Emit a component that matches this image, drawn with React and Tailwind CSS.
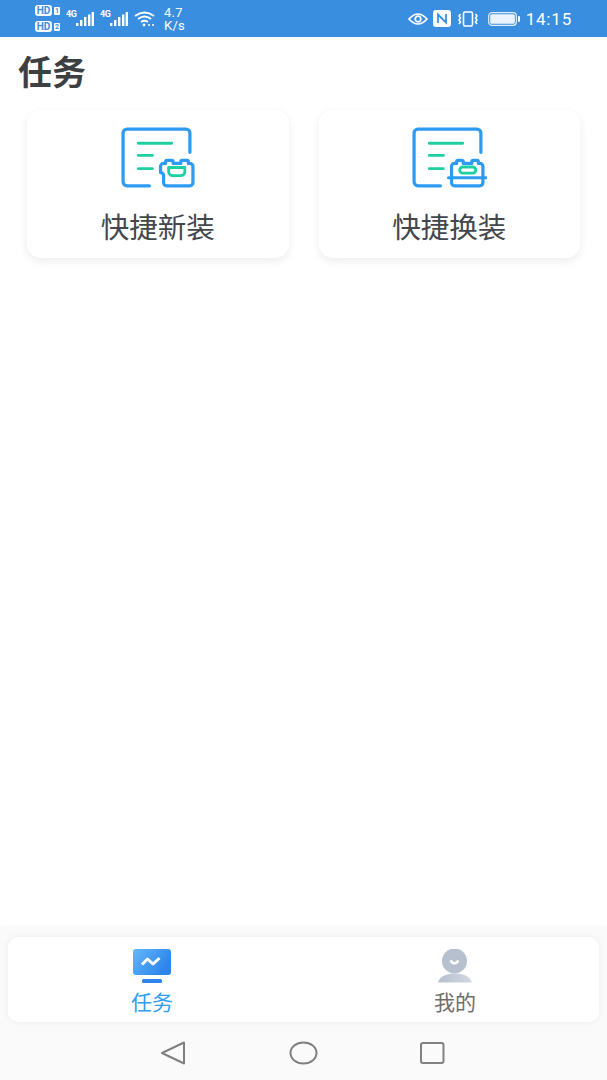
import React from "react";

const CJK = "font-['Roboto','Noto_Sans_CJK_SC',sans-serif]";

function Signal() {
  return (
    <div className="flex items-start h-[20px] mt-[1px]">
      <span className="text-[9px] leading-[10px] font-bold text-white font-['Roboto',sans-serif] w-[10px] tracking-[-0.4px]">4G</span>
      <svg width="18" height="17" viewBox="0 0 18 17" className="mt-[3px]" fill="#fff">
        <rect x="0" y="11" width="2.4" height="3" />
        <rect x="4" y="8" width="2.4" height="6" />
        <rect x="8" y="5" width="2.4" height="9" />
        <rect x="12" y="2.5" width="2.4" height="11.5" />
        <rect x="15.6" y="0" width="2.4" height="14" />
      </svg>
    </div>
  );
}

function HdBadge({ n }) {
  return (
    <div className="flex items-center gap-[2px] h-[11px]">
      <span className="w-[17px] h-[11px] rounded-[3px] bg-white text-[#3a8ee0] text-[10px] leading-[11px] font-bold text-center font-['Roboto',sans-serif]">HD</span>
      <span className="w-[6px] h-[8px] rounded-[1px] bg-white text-[#3a8ee0] text-[7px] leading-[8px] font-bold text-center font-['Roboto',sans-serif]">{n}</span>
    </div>
  );
}

function StatusBar() {
  return (
    <div className="h-[37px] shrink-0 bg-[#3a8ee0] flex items-center justify-between pl-[35px] pr-[35px] text-white">
      <div className="flex items-center">
        <div className="flex flex-col gap-[5px] w-[31px]">
          <HdBadge n="1" />
          <HdBadge n="2" />
        </div>
        <Signal />
        <div className="w-[6px]" />
        <Signal />
        <svg width="22" height="16" viewBox="0 0 22 16" className="ml-[6px]" fill="none" stroke="#fff" strokeWidth="1.8">
          <path d="M1 5 Q10.5 -2 20 5" />
          <path d="M4 8 Q10.5 3 17 8" />
          <path d="M7 11 Q10.5 8.5 14 11" />
          <circle cx="10" cy="14" r="1.4" fill="#fff" stroke="none" />
          <path d="M14 14h2M18 14h2" strokeWidth="1.4" />
        </svg>
        <div className="ml-[8px] text-[13px] leading-[13px] font-['Roboto',sans-serif] tracking-[0.3px]">
          <div>4.7</div>
          <div>K/s</div>
        </div>
      </div>
      <div className="flex items-center">
        <svg width="20" height="14" viewBox="0 0 20 14" fill="none" stroke="#fff" strokeWidth="1.7">
          <path d="M1 7 Q10 -3 19 7 Q10 17 1 7Z" />
          <circle cx="10" cy="7" r="2.8" />
        </svg>
        <svg width="18" height="17" viewBox="0 0 18 17" className="ml-[5px]">
          <rect width="18" height="17" rx="3" fill="#fff" />
          <path d="M5 13V4.5l8 8V4" fill="none" stroke="#3a8ee0" strokeWidth="1.8" />
        </svg>
        <svg width="22" height="16" viewBox="0 0 22 16" className="ml-[6px]" fill="none" stroke="#fff" strokeWidth="1.6">
          <rect x="6.5" y="1" width="9" height="14" rx="1.5" />
          <path d="M3.5 3l-1.5 2 1.5 2-1.5 2 1.5 2 -1.5 2M18.5 3l1.5 2-1.5 2 1.5 2-1.5 2 1.5 2" strokeWidth="1.5" />
        </svg>
        <svg width="32" height="14" viewBox="0 0 32 14" className="ml-[9px]">
          <rect x="0.7" y="0.7" width="27.6" height="12.6" rx="3" fill="none" stroke="#fff" strokeWidth="1.2" opacity="0.85" />
          <rect x="2.2" y="2.2" width="24.6" height="9.6" rx="1.5" fill="#eaf3fd" />
          <rect x="30" y="4" width="2" height="6" rx="1" fill="#fff" />
        </svg>
        <span className="ml-[6px] text-[17px] leading-[20px] font-['Roboto',sans-serif] tracking-[0.8px]">14:15</span>
      </div>
    </div>
  );
}

function DocFrame() {
  return (
    <>
      <path d="M30 60H8a4 4 0 0 1-4-4V8a4 4 0 0 1 4-4H66a4 4 0 0 1 4 4V27" stroke="#2e9bf2" strokeWidth="3.2" strokeLinecap="round" />
      <path d="M19 18H52M19 30H33M19 43H33" stroke="#1fcfa4" strokeWidth="2.8" strokeLinecap="round" />
    </>
  );
}

function NewIcon() {
  return (
    <svg width="76" height="64" viewBox="1 0 75 63.2" fill="none">
      <DocFrame />
      <path d="M44 38H46V36.5a1.5 1.5 0 0 1 1.5-1.5H52a1.5 1.5 0 0 1 1.5 1.5V38H61V36.5a1.5 1.5 0 0 1 1.5-1.5H67a1.5 1.5 0 0 1 1.5 1.5V38H70a3 3 0 0 1 3 3V57a3 3 0 0 1-3 3H47a3 3 0 0 1-3-3V50a3 3 0 0 0-3-3V41a3 3 0 0 1 3-3Z" fill="#fff" stroke="#2e9bf2" strokeWidth="3.2" strokeLinejoin="round" />
      <path d="M49 42H65V46a4 4 0 0 1-4 4H53a4 4 0 0 1-4-4Z" stroke="#1fcfa4" strokeWidth="2.8" strokeLinejoin="round" />
    </svg>
  );
}

function SwapIcon() {
  return (
    <svg width="76" height="64" viewBox="1 0 75 63.2" fill="none">
      <DocFrame />
      <path d="M44 38H46V36.5a1.5 1.5 0 0 1 1.5-1.5H51a1.5 1.5 0 0 1 1.5 1.5V38H61V36.5a1.5 1.5 0 0 1 1.5-1.5H66a1.5 1.5 0 0 1 1.5 1.5V38H69a3 3 0 0 1 3 3V57a3 3 0 0 1-3 3H44a3 3 0 0 1-3-3V41a3 3 0 0 1 3-3Z" fill="#fff" stroke="#2e9bf2" strokeWidth="3.2" strokeLinejoin="round" />
      <path d="M38 52H75" stroke="#2e9bf2" strokeWidth="3" strokeLinecap="round" />
      <rect x="49" y="41.5" width="16" height="6" rx="3" stroke="#1fcfa4" strokeWidth="2.8" />
    </svg>
  );
}

function Card({ icon, label }) {
  return (
    <div className="flex-1 h-[148px] rounded-[14px] bg-white shadow-[0_3px_10px_rgba(0,0,0,0.08)] flex flex-col items-center pt-[15px]">
      {icon}
      <div className="mt-[22px] text-[28.5px] leading-[36px] text-[#43474c]">{label}</div>
    </div>
  );
}

function TabIconTask() {
  return (
    <svg width="38" height="34" viewBox="0 0 38 34" className="block">
      <defs>
        <linearGradient id="mon" x1="0" y1="0" x2="1" y2="0.5">
          <stop offset="0" stopColor="#63b8fb" />
          <stop offset="1" stopColor="#2d84ea" />
        </linearGradient>
      </defs>
      <rect width="38" height="26" rx="3" fill="url(#mon)" />
      <path d="M9 15.5l5.5-5.5 5.5 5 6.5-6" fill="none" stroke="#fff" strokeWidth="3" strokeLinejoin="round" />
      <rect x="9" y="30" width="20" height="4" rx="1.5" fill="#2d84ea" />
    </svg>
  );
}

function TabIconMine() {
  return (
    <svg width="34" height="34" viewBox="0 0 34 34" className="block">
      <defs>
        <linearGradient id="bod" x1="0" y1="0" x2="1" y2="0">
          <stop offset="0" stopColor="#b4bfce" />
          <stop offset="1" stopColor="#d3d9e1" />
        </linearGradient>
      </defs>
      <circle cx="16.5" cy="12" r="12.5" fill="#b6c0ce" />
      <path d="M12.5 11.5Q16.5 17.5 20.5 11.5" fill="none" stroke="#fff" strokeWidth="2.6" />
      <path d="M0 33.5C2 27 9 24.5 17 24.5S32 27 34 33.5Z" fill="url(#bod)" />
    </svg>
  );
}

function Tab({ icon, label, active }) {
  return (
    <div className="w-[44px] flex flex-col items-center">
      <div className="h-[34px] flex justify-center w-[44px]">{icon}</div>
      <div className={`mt-[6px] text-[21px] leading-[29px] whitespace-nowrap ${active ? "text-[#2f9bf3]" : "text-[#6e6e6e]"}`}>{label}</div>
    </div>
  );
}

function SystemNav() {
  return (
    <div className="h-[58px] flex items-center pl-[160px] pt-[4px] gap-[103px]">
      <svg width="26" height="24" viewBox="0 0 26 24" fill="none" stroke="#808080" strokeWidth="2" strokeLinejoin="round">
        <path d="M24 1.5V22.5L2 12Z" />
      </svg>
      <svg width="29" height="24" viewBox="0 0 29 24" fill="none" stroke="#808080" strokeWidth="2">
        <ellipse cx="14.5" cy="12" rx="13" ry="10.5" />
      </svg>
      <svg width="26" height="22" viewBox="0 0 26 22" fill="none" stroke="#808080" strokeWidth="2" className="-ml-[2px]">
        <rect x="2" y="1" width="22.5" height="20" rx="2" />
      </svg>
    </div>
  );
}

export default function App() {
  return (
    <div className={`h-screen w-full flex flex-col bg-white overflow-hidden ${CJK}`}>
      <StatusBar />
      <div className="flex-1 min-h-0">
        <h1 className="pl-[18px] pt-[13px] text-[34px] leading-[46px] font-bold text-[#3c4043]">任务</h1>
        <div className="mt-[14px] px-[27px] flex gap-[30px]">
          <Card icon={<NewIcon />} label="快捷新装" />
          <Card icon={<SwapIcon />} label="快捷换装" />
        </div>
      </div>
      <div className="shrink-0 bg-[#fafafa] pt-[10px] shadow-[0_-1px_3px_rgba(0,0,0,0.03)]">
        <div className="mx-[8px] h-[85px] rounded-[10px] bg-white shadow-[0_0_6px_rgba(0,0,0,0.06)] flex justify-between px-[122px] pt-[12px]">
          <Tab icon={<TabIconTask />} label="任务" active />
          <Tab icon={<TabIconMine />} label="我的" />
        </div>
        <SystemNav />
      </div>
    </div>
  );
}
